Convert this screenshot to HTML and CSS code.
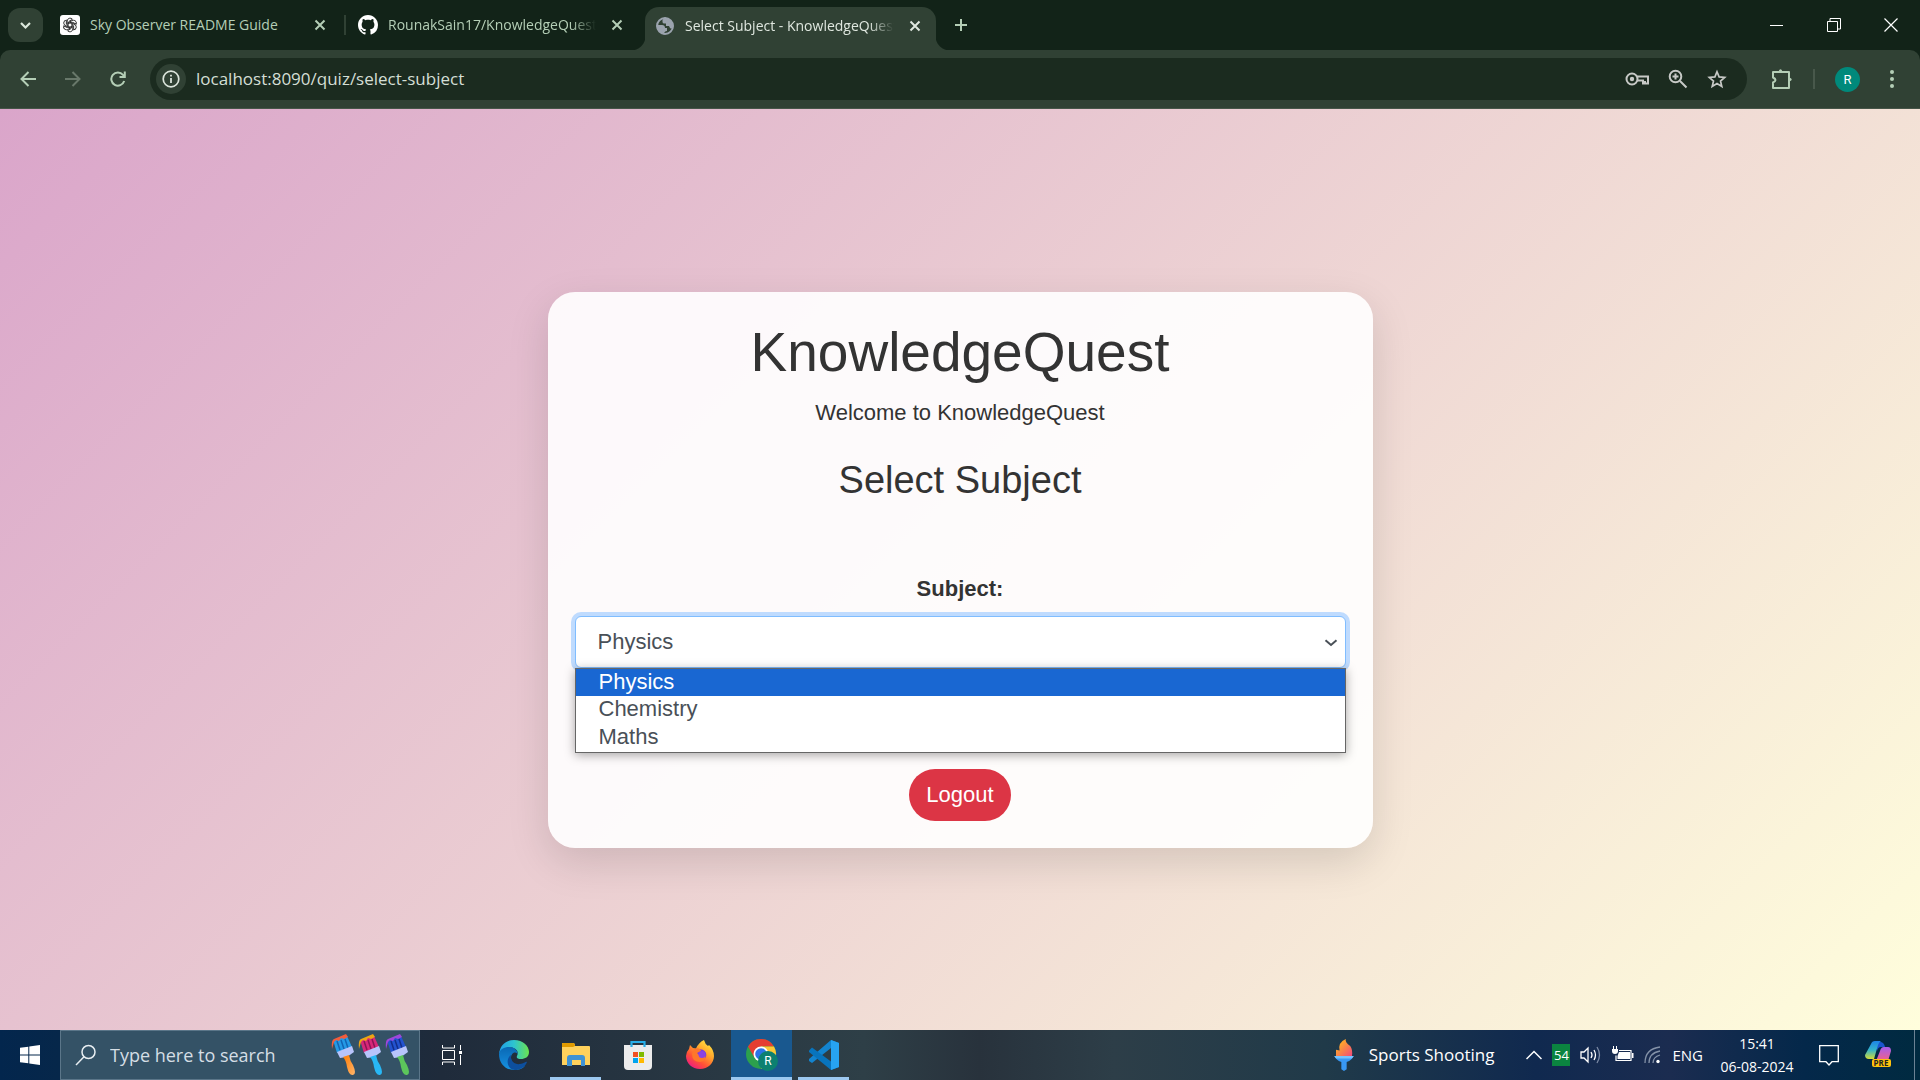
FILE: index.html
```html
<!DOCTYPE html>
<html lang="en">
<head>
<meta charset="utf-8">
<title>Select Subject - KnowledgeQuest</title>
<link rel="stylesheet" href="styles.css">
</head>
<body>
<header class="browser">
  <div class="tabstrip">
    <button class="tab-search" aria-label="Search tabs"><svg width="35" height="34" viewBox="0 0 35 34"><path d="M13 15l4.500 4.500 4.500-4.500" fill="none" stroke="#dce8dc" stroke-width="2.200"/></svg></button>
    <div class="tab tab-first">
      <svg class="favicon" width="20" height="20" viewBox="0 0 20 20"><rect width="20" height="20" rx="3" fill="#fff"/><g fill="none" stroke="#222" stroke-width=".9"><path id="petal" d="M10 12.200L7.200 10.600V6a2.900 2.900 0 0 1 5.200-1.700L8.600 6.600"/><use href="#petal" transform="rotate(60 10 10)"/><use href="#petal" transform="rotate(120 10 10)"/><use href="#petal" transform="rotate(180 10 10)"/><use href="#petal" transform="rotate(240 10 10)"/><use href="#petal" transform="rotate(300 10 10)"/></g></svg>
      <span class="tab-title">Sky Observer README Guide</span>
      <button class="tab-close" aria-label="Close tab"><svg width="12" height="12" viewBox="0 0 12 12"><path d="M1.500 1.500l9 9m0-9l-9 9"/></svg></button>
    </div>
    <div class="tab-divider"></div>
    <div class="tab tab-second">
      <svg class="favicon" width="20" height="20" viewBox="0 0 16 16"><path fill="#fff" d="M8 0C3.580 0 0 3.580 0 8c0 3.540 2.290 6.530 5.470 7.590.4.070.55-.17.55-.38 0-.19-.01-.82-.01-1.490-2.010.37-2.530-.49-2.690-.94-.09-.23-.48-.94-.82-1.130-.28-.15-.68-.52-.01-.53.63-.01 1.080.58 1.230.82.72 1.210 1.870.87 2.330.66.070-.52.28-.87.51-1.070-1.780-.2-3.640-.89-3.640-3.950 0-.87.31-1.590.82-2.150-.08-.2-.36-1.020.08-2.120 0 0 .67-.21 2.200.82.640-.18 1.320-.27 2-.27s1.360.09 2 .27c1.530-1.040 2.200-.82 2.200-.82.44 1.100.16 1.920.08 2.120.51.56.82 1.270.82 2.150 0 3.070-1.870 3.750-3.650 3.950.29.25.54.73.54 1.480 0 1.070-.01 1.930-.01 2.200 0 .21.15.46.55.38A8.010 8.010 0 0 0 16 8c0-4.420-3.580-8-8-8z"/></svg>
      <span class="tab-title fade">RounakSain17/KnowledgeQuest</span>
      <button class="tab-close" aria-label="Close tab"><svg width="12" height="12" viewBox="0 0 12 12"><path d="M1.500 1.500l9 9m0-9l-9 9"/></svg></button>
    </div>
    <div class="tab tab-active">
      <svg class="favicon" width="20" height="20" viewBox="0 0 20 20"><circle cx="10" cy="10" r="8" fill="none" stroke="#9ba3ae" stroke-width="2"/><path d="M1.500 9H7q3 0 3 3h2v3q-3 0-3 3.500Q2 17 1.500 9zM10 1.500q-1 1.500-2.500 2V6q0 1.500 2 1.500h1.500V10H14l1 2q1.500 1 3 0Q20 4 10 1.500z" fill="#9ba3ae"/></svg>
      <span class="tab-title fade">Select Subject - KnowledgeQuest</span>
      <button class="tab-close" aria-label="Close tab"><svg width="12" height="12" viewBox="0 0 12 12"><path d="M1.500 1.500l9 9m0-9l-9 9"/></svg></button>
    </div>
    <button class="new-tab" aria-label="New tab"><svg width="14" height="14" viewBox="0 0 14 14"><path d="M7 1v12M1 7h12" stroke="#b4ceb6" stroke-width="2"/></svg></button>
    <div class="window-controls">
      <button aria-label="Minimize"><svg width="14" height="14"><path d="M0 7.500h13" stroke="#fff"/></svg></button>
      <button aria-label="Restore"><svg width="14" height="14" fill="none" stroke="#fff"><path d="M.5 3.500h10v10H.5zM3 3V.5h10.500V11H11"/></svg></button>
      <button aria-label="Close"><svg width="14" height="14"><path d="M.5.5l13 13m0-13l-13 13" stroke="#fff" stroke-width="1.200"/></svg></button>
    </div>
  </div>
  <div class="toolbar">
    <div class="nav-buttons">
      <button aria-label="Back"><svg width="16" height="16" viewBox="0 0 16 16"><path d="M16 8H2M8.500 1L1.500 8l7 7" fill="none" stroke="#b4ceb6" stroke-width="2"/></svg></button>
      <button aria-label="Forward"><svg width="16" height="16" viewBox="0 0 16 16"><path d="M0 8h14M7.500 1l7 7-7 7" fill="none" stroke="#68786a" stroke-width="2"/></svg></button>
      <button aria-label="Reload"><svg width="16" height="16" viewBox="0 0 16 16"><path d="M14.200 10A6.600 6.600 0 1 1 13 3.800L14.500 5.500M14.800.5v5.500H9.500" fill="none" stroke="#b4ceb6" stroke-width="2"/></svg></button>
    </div>
    <div class="omnibox">
      <button class="site-info" aria-label="Site information"><svg width="18" height="18" viewBox="0 0 18 18"><circle cx="9" cy="9" r="7.800" fill="none" stroke="#dce5dc" stroke-width="1.700"/><path d="M9 8v5M9 4.800v1.700" stroke="#dce5dc" stroke-width="1.800"/></svg></button>
      <input class="address" type="text" aria-label="Address" value="localhost:8090/quiz/select-subject">
      <div class="omni-actions">
        <button aria-label="Passwords"><svg width="24" height="20" viewBox="0 0 24 20" fill="none" stroke="#c7c9c6" stroke-width="2"><circle cx="7" cy="10" r="5.500"/><circle cx="7" cy="10" r="2.200" fill="#c7c9c6" stroke="none"/><path d="M12 7.500h11v7h-5v-3h-6"/><path d="M20 12v3"/></svg></button>
        <button aria-label="Zoom"><svg width="20" height="20" viewBox="0 0 20 20" fill="none" stroke="#c7c9c6" stroke-width="2"><circle cx="7.500" cy="7.500" r="5.800"/><path d="M12 12l6.500 6.500M7.500 4.500v6M4.500 7.500h6"/></svg></button>
        <button aria-label="Bookmark"><svg width="20" height="20" viewBox="0 0 20 20"><path d="M10 2.800l2.100 5.100 5.600.5-4.200 3.600 1.300 5.400L10 14.600l-4.800 2.800L6.500 12 2.300 8.400l5.600-.5z" fill="none" stroke="#c7c9c6" stroke-width="1.700"/></svg></button>
      </div>
    </div>
    <button class="extensions" aria-label="Extensions"><svg width="22" height="22" viewBox="0 0 22 22"><path d="M2 4h16v16H2v-5.500q5-2.500 0-5z" fill="none" stroke="#b4ceb6" stroke-width="2" stroke-linejoin="round"/><path d="M7.500 3.500q2-4.500 4 0zM18.500 9.500q4.500 2 0 4z" fill="#b4ceb6"/></svg></button>
    <div class="toolbar-divider"></div>
    <button class="profile" aria-label="Profile">R</button>
    <button class="menu" aria-label="Menu"><svg width="6" height="20" viewBox="0 0 6 20" fill="#b4ceb6"><circle cx="3" cy="3" r="2"/><circle cx="3" cy="10" r="2"/><circle cx="3" cy="17" r="2"/></svg></button>
  </div>
</header>

<main class="page">
  <section class="card">
    <h1>KnowledgeQuest</h1>
    <p class="welcome">Welcome to KnowledgeQuest</p>
    <h2>Select Subject</h2>
    <form class="subject-form">
      <label for="subject">Subject:</label>
      <div class="select-wrap">
        <select id="subject"><option selected>Physics</option><option>Chemistry</option><option>Maths</option></select>
        <svg class="caret" width="14" height="8" viewBox="0 0 14 8"><path d="M1.500 1.200L7 6l5.500-4.800" fill="none" stroke="#495057" stroke-width="2"/></svg>
        <ul class="options" role="listbox" aria-label="Subject options">
          <li class="current" role="option" aria-selected="true">Physics</li>
          <li role="option">Chemistry</li>
          <li role="option">Maths</li>
        </ul>
      </div>
    </form>
    <button class="logout">Logout</button>
  </section>
</main>

<footer class="taskbar">
  <button class="start" aria-label="Start"><svg width="20" height="20" viewBox="0 0 20 20" fill="#fff"><path d="M0 2.800L8.300 1.700V9.400H0zM9.300 1.500L20 0v9.400H9.300zM0 10.400h8.300v7.900L0 17.200zM9.300 10.400H20V20L9.300 18.500z"/></svg></button>
  <label class="search">
    <svg width="22" height="22" viewBox="0 0 22 22" fill="none" stroke="#e8eef2" stroke-width="1.500"><circle cx="13.500" cy="8" r="6.500"/><path d="M9 12.700L1 21"/></svg>
    <input type="text" placeholder="Type here to search" aria-label="Search">
    <svg class="brushes" width="78" height="42" viewBox="0 0 78 42">
      <defs><linearGradient id="or" x2="1" y2="1"><stop stop-color="#ff7a00"/><stop offset="1" stop-color="#ffb56b"/></linearGradient></defs>
      <g><path d="M2 6L16 2l5 11-15 6z" fill="#2499e6"/><path d="M6 7l3 9M10 6l3 9M14 5l3 9" stroke="#1264b4" stroke-width="1.500"/><path d="M1 15Q0 6 3 5L15 0l2 3-4 2-3-1-2 3-3-1-2 2z" fill="#f25c3d"/><path d="M6 18l15-6 2 6-7 5-7 1z" fill="#b8c4fb"/><path d="M12 23l6-2q1 6 4 10 4 9 0 10-4 1-6-8-1-7-4-10z" fill="url(#or)"/></g>
      <g transform="translate(27)"><path d="M2 6L16 2l5 11-15 6z" fill="#d82879"/><path d="M6 7l3 9M10 6l3 9M14 5l3 9" stroke="#8c1556" stroke-width="1.500"/><path d="M1 15Q0 6 3 5L15 0l2 3-4 2-3-1-2 3-3-1-2 2z" fill="#eea513"/><path d="M6 18l15-6 2 6-7 5-7 1z" fill="#b8c4fb"/><path d="M12 23l6-2q1 6 4 10 4 9 0 10-4 1-6-8-1-7-4-10z" fill="#28b7f5"/></g>
      <g transform="translate(54)"><path d="M2 6L16 2l5 11-15 6z" fill="#2353cf"/><path d="M6 7l3 9M10 6l3 9M14 5l3 9" stroke="#142e89" stroke-width="1.500"/><path d="M1 15Q0 6 3 5L15 0l2 3-4 2-3-1-2 3-3-1-2 2z" fill="#9d47dc"/><path d="M6 18l15-6 2 6-7 5-7 1z" fill="#b8c4fb"/><path d="M12 23l6-2q1 6 4 10 4 9 0 10-4 1-6-8-1-7-4-10z" fill="#5cc55b"/></g>
    </svg>
  </label>
  <nav class="apps" aria-label="Pinned apps">
    <button class="app" aria-label="Task View"><svg width="20" height="20" viewBox="0 0 20 20" fill="none" stroke="#fff"><path d="M.5 5.500h12v9H.5zM.5 0v3h12V0M.5 20v-3h12v3M18.500 0v5M18.500 10v10"/><path d="M17 6h3v3h-3z" fill="#fff" stroke="none"/></svg></button>
    <button class="app" aria-label="Edge"><svg width="30" height="30" viewBox="0 0 30 30"><defs><linearGradient id="e1" x2="1"><stop stop-color="#1f9ee8"/><stop offset=".5" stop-color="#2ec4cf"/><stop offset="1" stop-color="#6be34e"/></linearGradient><linearGradient id="e2" x2="0" y2="1"><stop stop-color="#0a68b4"/><stop offset="1" stop-color="#1692e2"/></linearGradient></defs><path d="M0 14C1 5 7 0 15 0c9 0 15 6 15 12 0 5-4 7-8 7-3 0-5-1-4-3C21 10 14 6 9 8 5 9 1 11 0 14z" fill="url(#e1)"/><path d="M0 14C1 9 5 7 10 7c6 0 9 4 8.500 7.500C18 11 12 12 12 18c0 6 7 11 14 8-3 3-7 4-11 4C6 30 0 23 0 14z" fill="url(#e2)"/><path d="M12 15c-1 6 4 10 9 9 4 0 6-3 7-2-2 6-8 8-12 8-9-1-9-12-4-15z" fill="#0d4f9e"/></svg></button>
    <button class="app open" aria-label="File Explorer"><svg width="28" height="24" viewBox="0 0 28 24"><path d="M0 1q0-1 1-1h10q2 0 2 3h14q1 0 1 1v18H0z" fill="#ffd15c"/><path d="M0 4V1q0-1 1-1h10q2 0 2 3l-2 1z" fill="#e09a00"/><path d="M5 23V15q0-3 3-3h12q3 0 3 3v8h-4v-6h-9v6z" fill="#3f92d4"/></svg></button>
    <button class="app" aria-label="Microsoft Store"><svg width="30" height="30" viewBox="0 0 30 30"><path d="M1 5h28v21q0 4-4 4H5q-4 0-4-4z" fill="#ececec"/><path d="M8.500 7V2h13v5" fill="none" stroke="#27aee8" stroke-width="2.200"/><path d="M10 12h5v5h-5z" fill="#f25022"/><path d="M16 12h5v5h-5z" fill="#7fba00"/><path d="M10 18h5v5h-5z" fill="#00a4ef"/><path d="M16 18h5v5h-5z" fill="#ffb900"/></svg></button>
    <button class="app" aria-label="Firefox"><svg width="30" height="30" viewBox="0 0 30 30"><defs><linearGradient id="f1" x1=".9" y1="0" x2=".2" y2="1"><stop stop-color="#fff044"/><stop offset=".4" stop-color="#ffa32b"/><stop offset=".7" stop-color="#ff5136"/><stop offset="1" stop-color="#ec1689"/></linearGradient></defs><path d="M5 5l3 3 3 .5Q14 2 19 0q1 4 4 6l1-1q5 5 5 11c0 7-6 13-14 13S1 23 1 16q0-4 3-7z" fill="url(#f1)"/><circle cx="15.500" cy="15" r="5.800" fill="#743ce0"/><path d="M9 9q6-2 7 2l-4 2 3 3q4 1 5-2 2 7-5 8-8 0-8-8z" fill="#ff772b"/><circle cx="17" cy="14.500" r="3.500" fill="#8a43e4"/></svg></button>
    <button class="app selected" aria-label="Chrome"><svg width="32" height="32" viewBox="0 0 32 32"><circle cx="15" cy="15" r="15" fill="#2ca04d"/><path d="M2 7.500A15 15 0 0 1 28 7.500H15L8.500 18.700z" fill="#e53e32"/><path d="M28 7.500H15l6.500 11.200L15 30A15 15 0 0 0 28 7.500z" fill="#fcc934"/><circle cx="15" cy="15" r="7.500" fill="#fff"/><circle cx="15" cy="15" r="5.800" fill="#2b74e8"/><circle cx="22" cy="22" r="10" fill="#0c8070"/><text x="22" y="26" text-anchor="middle" class="badge-letter">R</text></svg></button>
    <button class="app open" aria-label="Visual Studio Code"><svg width="30" height="30" viewBox="0 0 30 30"><path d="M22 0l8 3v24l-8 3V8L3 23l-3-2v-2z" fill="#1384cf"/><path d="M0 10.500L3 7.500l19 14V30L0 12z" fill="#0874bd"/><path d="M22 0l8 3v24l-8 3z" fill="#27a3f1"/></svg></button>
  </nav>
  <div class="tray">
    <button class="news"><svg width="22" height="36" viewBox="0 0 22 36"><defs><linearGradient id="t1" x2="1" y2="1"><stop offset=".2" stop-color="#ffae22"/><stop offset="1" stop-color="#f04a7c"/></linearGradient></defs><path d="M2 19V12l4 1Q4 4 13 0q-1 4 5 8 3 4 2 11z" fill="url(#t1)"/><path d="M0 19h22l-3 4q-2 2-5 3v8l-3 2-3-2v-8q-3-1-5-3z" fill="#3898f5"/><path d="M0 19h22l-2 3H2z" fill="#75c2ff"/></svg><span>Sports Shooting</span></button>
    <button aria-label="Hidden icons"><svg width="16" height="10" viewBox="0 0 16 10"><path d="M.5 9L8 1.500 15.500 9" fill="none" stroke="#fff" stroke-width="1.500"/></svg></button>
    <span class="monitor">54</span>
    <button aria-label="Volume"><svg width="22" height="20" viewBox="0 0 22 20" fill="none" stroke="#fff" stroke-width="1.300"><path d="M1 7h3l4-4v14l-4-4H1zM11 7q2 3 0 6M14 5q3 5 0 10"/><path d="M17 2q5 8 0 16" stroke="#7c8aa5"/></svg></button>
    <button aria-label="Battery"><svg width="22" height="18" viewBox="0 0 22 18"><path d="M7 4.500h12v10H4v-5" fill="none" stroke="#fff" stroke-width="1.200"/><path d="M7 6h11v7H5.500v-3zM20 7h1.500v5H20zM0 3h6v2q0 3-3 3T0 5zM1 0h1v3H1zM4 0h1v3H4z" fill="#fff"/></svg></button>
    <button aria-label="Network"><svg width="18" height="18" viewBox="0 0 18 18" fill="none" stroke="#8492a8" stroke-width="1.300"><path d="M1 17Q1 3 16 1M5 17Q5 7 16 5M9 17q0-6 7-8"/><circle cx="14" cy="15.500" r="1.700" fill="#fff" stroke="none"/></svg></button>
    <button class="language">ENG</button>
    <button class="clock"><span>15:41</span><span>06-08-2024</span></button>
    <button class="notifications" aria-label="Notifications"><svg width="20" height="24" viewBox="0 0 20 24"><path d="M.7 2.700h18.600v16H13l-3 3.300-3-3.300H.7z" fill="none" stroke="#fff" stroke-width="1.300"/></svg></button>
    <button class="copilot" aria-label="Copilot"><svg width="27" height="30" viewBox="0 0 27 30"><defs><linearGradient id="c1" x2="0" y2="1"><stop stop-color="#1c84e8"/><stop offset=".5" stop-color="#35b4c8"/><stop offset="1" stop-color="#d5dc35"/></linearGradient><linearGradient id="c2" x2="0" y2="1"><stop stop-color="#a55dee"/><stop offset="1" stop-color="#f46184"/></linearGradient></defs><path d="M12 2h3q4 0 5 5h-4q-3 0-4 4z" fill="#1a55cf"/><path d="M6 4q1-3 4-3h6q-2 1-3 4l-4 14H4q-4 0-4-4z" fill="url(#c1)"/><path d="M15 11q1-4 4-4h4q3 0 3 4l-3 10H11z" fill="url(#c2)"/><rect x="7" y="19" width="19" height="8" rx="2" fill="#ffc20e"/><text x="16" y="26" text-anchor="middle" class="pre">PRE</text></svg></button>
    <span class="desktop-edge"></span>
  </div>
</footer>
</body>
</html>
```
FILE: styles.css
```css
* { box-sizing: border-box; }
body {
  margin: 0;
  min-height: 100vh;
  display: flex;
  flex-direction: column;
  font-family: "Liberation Sans", Arial, sans-serif;
  font-size: 22px;
  color: #333;
}
button { padding: 0; border: 0; background: none; color: inherit; font: inherit; }
svg { display: block; flex: none; }

/* Browser window */
.browser { background: #122318; font-family: "Open Sans", "Noto Sans", sans-serif; color: #b4ceb6; }
.tabstrip { display: flex; align-items: center; height: 50px; padding-left: 8px; font-size: 14px; }
.tab-search { width: 35px; height: 34px; border-radius: 12px; background: #304134; }
.tab { display: flex; align-items: center; height: 42px; gap: 10px; }
.tab-first { width: 301px; padding: 0 18px 0 17px; }
.tab-second { width: 299px; padding: 0 22px 0 12px; }
.tab-divider { width: 2px; height: 20px; background: #304134; }
.tab-title { flex: 1; min-width: 0; overflow: hidden; white-space: nowrap; line-height: 24px; }
.fade { margin-right: 5px; mask-image: linear-gradient(to right, #000 88%, transparent); }
.tab-close svg { fill: none; stroke: currentColor; stroke-width: 2; }
.tab-active {
  position: relative;
  align-self: flex-end;
  width: 291px;
  height: 43px;
  padding: 0 15px 6px 10px;
  border-radius: 14px 14px 0 0;
  background: #304134;
  color: #dfe7df;
}
.tab-active::before, .tab-active::after { content: ""; position: absolute; bottom: 0; width: 14px; height: 14px; }
.tab-active::before { right: 100%; background: radial-gradient(circle at 0 0, transparent 14px, #304134 15px); }
.tab-active::after { left: 100%; background: radial-gradient(circle at 100% 0, transparent 14px, #304134 15px); }
.new-tab { margin-left: 18px; }
.window-controls { display: flex; margin-left: auto; padding-right: 1px; }
.window-controls button { display: grid; place-items: center; width: 57px; height: 50px; }
.toolbar {
  display: flex;
  align-items: center;
  height: 59px;
  padding: 0 25px 0 20px;
  border-radius: 10px 10px 0 0;
  border-bottom: 1px solid #465548;
  background: #304134;
}
.nav-buttons { display: flex; gap: 29px; margin-right: 24px; }
.omnibox { flex: 1; display: flex; align-items: center; height: 42px; padding: 0 20px 0 6px; border-radius: 21px; background: #1b2b1f; }
.site-info { display: grid; place-items: center; width: 30px; height: 30px; border-radius: 50%; background: #304134; }
.address { flex: 1; min-width: 0; margin-left: 10px; padding: 0; border: 0; outline: 0; background: none; color: #d4dfd5; font: 17px/24px "Open Sans", "Noto Sans", sans-serif; }
.omni-actions { display: flex; align-items: center; gap: 19px; }
.extensions { margin-left: 24px; }
.toolbar-divider { width: 2px; height: 20px; margin: 0 20px; background: #48584b; }
.profile { width: 25px; height: 25px; border-radius: 50%; background: #00897b; color: #fff; font: 13px/25px Roboto, sans-serif; text-align: center; }
.menu { margin-left: 29px; }

/* Quiz page */
.page {
  flex: 1;
  display: flex;
  align-items: center;
  justify-content: center;
  background: linear-gradient(135deg, #daa5ca, #fffedc);
}
.card {
  width: 825px;
  max-width: 100%;
  padding: 27px;
  border-radius: 27px;
  background: rgba(255, 255, 255, 0.9);
  box-shadow: 0 14px 42px rgba(0, 0, 0, 0.13);
  text-align: center;
}
h1, h2, p { margin: 0; }
h1 { margin-bottom: 11px; font-size: 55px; line-height: 66px; font-weight: 400; }
.welcome { margin-bottom: 28px; line-height: 33px; }
h2 { margin-bottom: 69px; font-size: 38px; line-height: 46px; font-weight: 400; }
.subject-form label { display: block; margin-bottom: 11px; line-height: 33px; font-weight: 700; }
.select-wrap { position: relative; margin-bottom: 101px; color: #495057; text-align: left; }
.select-wrap select {
  display: block;
  width: 100%;
  height: 52px;
  padding: 0 22px;
  border: 1px solid #80bdff;
  border-radius: 6px;
  appearance: none;
  background: #fff;
  box-shadow: 0 0 0 4px #bfdbfe;
  color: inherit;
  font: inherit;
}
.caret { position: absolute; top: 23px; right: 8px; }
.options {
  position: absolute;
  top: 100%;
  left: 0;
  right: 0;
  margin: 0;
  padding: 0;
  border: 1px solid #666;
  background: #fff;
  box-shadow: 0 2px 10px rgba(0, 0, 0, 0.35);
  list-style: none;
}
.options li { padding: 0 23px; height: 28px; line-height: 26px; }
.options .current { height: 27px; background: #1967d2; color: #fff; }
.logout { height: 52px; padding: 0 17px; border-radius: 26px; background: #dc3545; color: #fff; }

/* Taskbar */
.taskbar {
  display: flex;
  align-items: stretch;
  height: 50px;
  background: linear-gradient(to right, #03264d 0, #06274a 3%, #1f2b3b 23%, #2e3f47 45%, #28323c 51%, #2d3e48 58%, #203a49 69%, #10294f 80%, #1b2c50 87%, #04284a 94%, #002a40);
  color: #fff;
  font: 16px/24px "Open Sans", "Noto Sans", sans-serif;
}
.start { display: grid; place-items: center; width: 60px; }
.search { display: flex; align-items: center; width: 360px; padding: 0 10px 0 14px; border: 1px solid #5b7689; background: #345266; }
.search input { flex: 1; min-width: 0; margin-left: 13px; padding: 0; border: 0; outline: 0; background: none; font: 18px/24px "Open Sans", "Noto Sans", sans-serif; }
.search input::placeholder { color: #d5dee5; opacity: 1; }
.apps { display: flex; gap: 1px; padding-left: 1px; }
.app { display: grid; place-items: center; width: 61px; height: 50px; border-bottom: 3px solid transparent; padding-top: 2px; }
.open { background: linear-gradient(#9cc8f0, #9cc8f0) center 100% / 51px 3px no-repeat border-box; }
.selected { background: #19588f; border-color: #9cc8f0; }
.badge-letter { fill: #fff; font: 12px Roboto, sans-serif; }
.tray { display: flex; align-items: center; margin-left: auto; }
.tray > * { margin-right: 10px; }
.news { display: flex; align-items: center; gap: 14px; font-size: 17px; }
.news svg { height: 32px; }
.tray .news { margin-right: 32px; }
.monitor { width: 18px; height: 22px; background: #0b8440; font-size: 13px; line-height: 22px; text-align: center; }
.language { font-size: 15px; }
.tray .language { margin-right: 14px; }
.clock { width: 80px; font-size: 14px; line-height: 23px; text-align: center; }
.clock span { display: block; }
.tray .clock { margin-right: 22px; }
.tray .notifications { margin-right: 26px; }
.tray .copilot { margin-right: 22px; }
.pre { fill: #222; font: bold 8px "Open Sans", sans-serif; }
.tray .desktop-edge { width: 1px; height: 50px; margin-right: 5px; background: #6b8294; }
```
